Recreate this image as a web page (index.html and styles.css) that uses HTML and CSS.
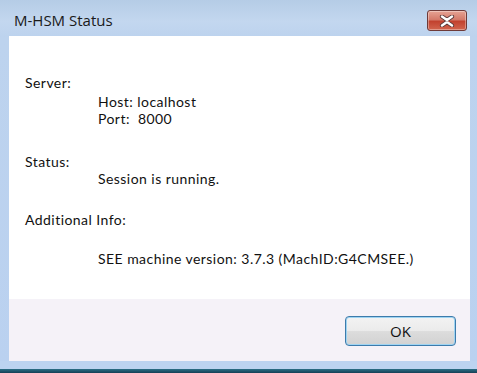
FILE: index.html
```html
<!DOCTYPE html>
<html lang="en">
<head>
  <meta charset="UTF-8">
  <title>M-HSM Status</title>
  <link rel="stylesheet" href="styles.css">
</head>
<body>

<div class="window">
  <div class="titlebar">
    <span class="title">M-HSM Status</span>
    <button class="close" aria-label="Close">
      <svg width="16" height="12" viewBox="0 0 16 12">
        <path d="M3 1.5 L8 5 L13 1.5 M3 10.5 L8 7 L13 10.5" stroke="#5a3a3a" stroke-width="4.2" fill="none" stroke-linecap="round"/>
        <path d="M3 1.5 L8 5 L13 1.5 M3 10.5 L8 7 L13 10.5" stroke="#ffffff" stroke-width="2.4" fill="none" stroke-linecap="round"/>
      </svg>
    </button>
  </div>

  <div class="client">
    <div class="content">
      <div class="label">Server:</div>
      <div class="values first">
        <div>Host: localhost</div>
        <div>Port:&nbsp; 8000</div>
      </div>

      <div class="label gap">Status:</div>
      <div class="values">
        <div>Session is running.</div>
      </div>

      <div class="label gap2">Additional Info:</div>
      <div class="values info">
        <div>SEE machine version: 3.7.3 (MachID:G4CMSEE.)</div>
      </div>
    </div>

    <div class="footer">
      <button class="ok">OK</button>
    </div>
  </div>

  <div class="frame-bottom"></div>
  <div class="edge"></div>
</div>

</body>
</html>
```

FILE: styles.css
```css
body {
  margin: 0;
  font-family: Lato, "Open Sans", Arial, sans-serif;
  background: #b9d1ee;
}
.window {
  width: 477px;
  height: 373px;
  display: flex;
  flex-direction: column;
  background: linear-gradient(to bottom, #bcd2ec 0, #bdd3ee 40px, #bad1f0 100%);
  overflow: hidden;
}
.titlebar {
  height: 36px;
  display: flex;
  align-items: center;
  padding: 0 10px 0 14px;
  background: linear-gradient(to bottom, #b5cce6 0, #c3d7ef 60%, #bdd3ee 100%);
}
.title {
  font-family: "Open Sans", Arial, sans-serif;
  font-size: 15px;
  color: #1a1a1a;
  padding-top: 3px;
}
.close {
  margin: 5px 0 0 auto;
  width: 40px;
  height: 21px;
  padding: 0;
  border: 1px solid #6e3a38;
  border-radius: 3px;
  background: linear-gradient(to bottom, #e6a394 0, #d47a6a 45%, #c2422f 55%, #d2654e 100%);
  display: flex;
  align-items: center;
  justify-content: center;
  box-shadow: inset 0 0 0 1px rgba(255,255,255,0.35);
}
.client {
  margin: 0 7px 0 9px;
  display: flex;
  flex-direction: column;
}
.content {
  height: 263px;
  background: #ffffff;
  padding: 38px 0 0 16px;
  box-sizing: border-box;
  font-size: 14px;
  letter-spacing: 0.45px;
  line-height: 17px;
  color: #111;
}
.values {
  margin-left: 73px;
}
.values.first {
  margin-top: 2px;
}
.gap {
  margin-top: 26px;
}
.gap2 {
  margin-top: 24px;
}
.values.info {
  margin-top: 22px;
}
.footer {
  height: 62px;
  background: #f5f2f8;
  display: flex;
  justify-content: flex-end;
  align-items: center;
  padding-right: 14px;
}
.ok {
  width: 111px;
  height: 30px;
  margin-top: 1px;
  font-family: "Open Sans", Arial, sans-serif;
  font-size: 15px;
  color: #111;
  border: 1px solid #3d7bab;
  border-radius: 4px;
  background: linear-gradient(to bottom, #f3f3f3 0, #ebebeb 48%, #dcdcdc 52%, #d2d2d2 100%);
  box-shadow: inset 0 0 0 1px #9fd4f2;
}
.frame-bottom {
  height: 8px;
  background: #bcd3f0;
}
.edge {
  height: 4px;
  background: linear-gradient(to bottom, #2c6f86, #163f55);
}
```
